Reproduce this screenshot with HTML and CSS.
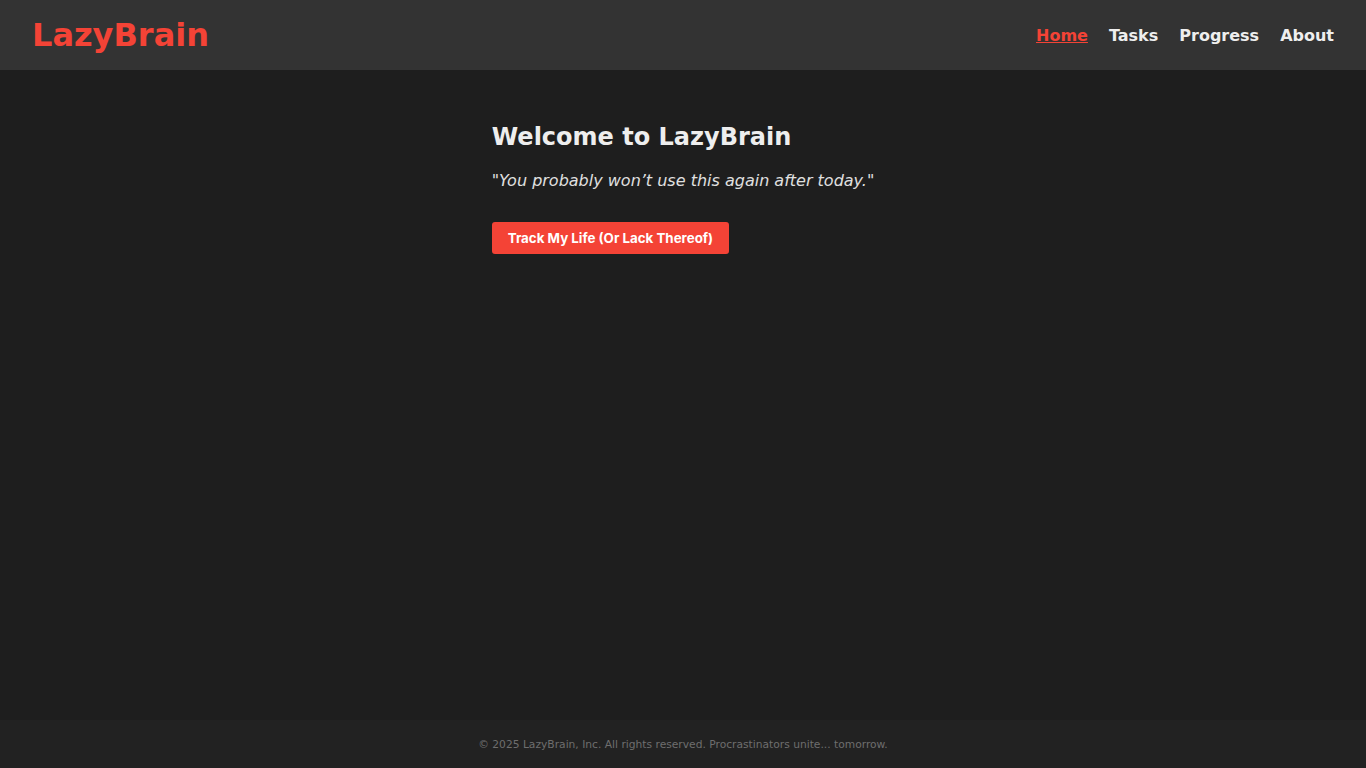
FILE: index.html
```html
<!DOCTYPE html>
<html lang="en">
<head>
<meta charset="utf-8">
<title>LazyBrain</title>
<link rel="stylesheet" href="styles.css">
</head>
<body>
<header class="header">
  <div class="logo">LazyBrain</div>
  <nav class="nav">
    <a class="nav-link active" href="#">Home</a>
    <a class="nav-link" href="#">Tasks</a>
    <a class="nav-link" href="#">Progress</a>
    <a class="nav-link" href="#">About</a>
  </nav>
</header>
<main class="main">
  <section class="hero">
    <h2 class="title">Welcome to LazyBrain</h2>
    <p class="quote">"You probably won’t use this again after today."</p>
    <button class="cta">Track My Life (Or Lack Thereof)</button>
  </section>
</main>
<footer class="footer">© 2025 LazyBrain, Inc. All rights reserved. Procrastinators unite... tomorrow.</footer>
</body>
</html>
```

FILE: styles.css
```css
* { box-sizing: border-box; }
html, body { margin: 0; padding: 0; }
body {
  min-height: 100vh;
  display: flex;
  flex-direction: column;
  background: #1e1e1e;
  color: #eeeeee;
  font-family: "DejaVu Sans", sans-serif;
}
.header {
  height: 70px;
  background: #333333;
  display: flex;
  align-items: center;
  justify-content: space-between;
  padding: 0 32px;
}
.logo {
  color: #f44336;
  font-size: 32px;
  font-weight: bold;
}
.nav {
  display: flex;
  gap: 21px;
}
.nav-link {
  color: #eeeeee;
  text-decoration: none;
  font-weight: bold;
  font-size: 16px;
}
.nav-link.active {
  color: #f44336;
  text-decoration: underline;
}
.main {
  flex: 1;
  display: flex;
  justify-content: center;
  padding-top: 53px;
}
.hero {
  width: fit-content;
}
.title {
  margin: 0;
  font-size: 24px;
  font-weight: bold;
  color: #eeeeee;
}
.quote {
  margin: 20px 0 32px;
  font-style: italic;
  font-size: 16px;
  color: #e0e0e0;
}
.cta {
  background: #f44336;
  color: #ffffff;
  border: none;
  border-radius: 3px;
  height: 32px;
  padding: 0 16px;
  font-family: Inter, sans-serif;
  font-weight: 700;
  font-size: 13.333px;
  cursor: pointer;
}
.footer {
  height: 48px;
  background: #222222;
  color: #6e6e6e;
  font-size: 10.7px;
  display: flex;
  align-items: center;
  justify-content: center;
}
```
